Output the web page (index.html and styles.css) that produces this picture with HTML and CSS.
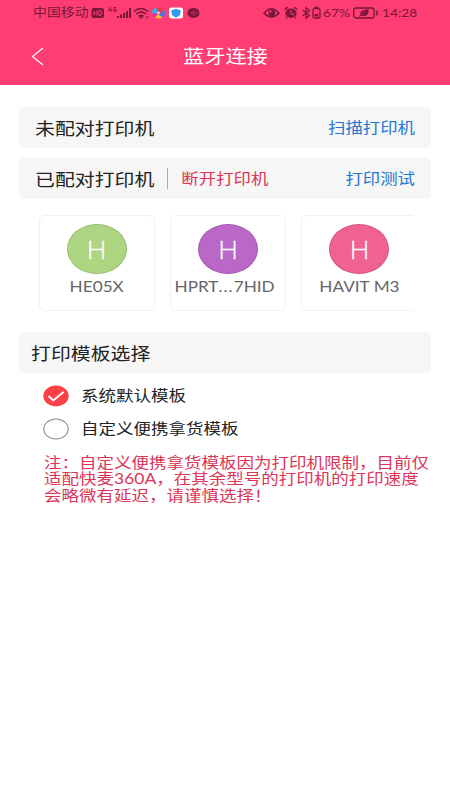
FILE: index.html
```html
<!DOCTYPE html>
<html lang="zh-CN">
<head>
<meta charset="utf-8">
<title>蓝牙连接</title>
<link rel="stylesheet" href="styles.css">
</head>
<body>
<header class="header">
  <div class="status">
    <span class="carrier flat">中国移动</span>
    <svg class="icons-left" width="112" height="18" viewBox="0 0 112 18">
      <rect x="2.500" y="4" width="12.500" height="10" rx="2.500" fill="#76173a"/>
      <path d="M5 6.500v5M8 6.500v5M5 9h3M10 6.500v5h1q2-.2 2-2.500t-2-2.500z" fill="none" stroke="#ff3d73" stroke-width="1"/>
      <path d="M21.500 3L19.500 6.200h3.200M22 4.500V7.700M27 3.500h-2.200v3.700h2.400v-1.700h-1.200" fill="none" stroke="#76173a" stroke-width=".9"/>
      <path d="M27.500 12v2M30.500 10.500v3.500M33.500 9v5M36.500 7v7M39.500 4v10" transform="translate(1.500 0)" stroke="#76173a" stroke-width="1.900"/>
      <path d="M45 7.500q7-6 14 0M47.200 10q4.800-4 9.600 0M49.500 12.300q2.500-2 5 0" fill="none" stroke="#76173a" stroke-width="1.500"/>
      <path d="M50.500 12.800h3L52 14.500zM57 12.500v2M59 12v2.500" fill="#76173a" stroke="#76173a" stroke-width=".8"/>
      <path d="M63.200 9q-.8-4.500 4.500-5l2.500 3.500-3.700 2z" fill="#28b4e6"/>
      <path d="M67.500 4q5-1.500 7.500 2l-3 4-3-1.500z" fill="#e83a4c"/>
      <path d="M75 6q3 4.500-2 7.500l-4-1.500 3-3z" fill="#3f7be8"/>
      <path d="M63.200 9q0 3.500 3 4.700l2.300-3.500z" fill="#d83aa0"/>
      <path d="M66.200 13.700q4 1.500 7-.3l-4.300-3.400z" fill="#ffc62c"/>
      <circle cx="69.500" cy="8.700" r="1.300" fill="#f7dce8"/>
      <rect x="80" y="3.500" width="14" height="11" rx="2.500" fill="#fff"/>
      <path d="M87 4.800q2 1.200 4.500 1.200v3q-.5 3-4.500 4.500-4-1.500-4.500-4.500V6q2.500 0 4.500-1.200z" fill="#319bf0"/>
      <ellipse cx="104.500" cy="9" rx="6" ry="5" fill="#76173a"/>
      <path d="M100.500 9h1.500M103 7.500v3M105 6v6M107 8v2M108 9h1" stroke="#ff3d73" stroke-width=".6"/>
    </svg>
    <svg class="icons-right" width="59" height="18" viewBox="0 0 59 18">
      <path d="M1 9.300q7.500-9 15 0-7.500 7.500-15 0z" fill="none" stroke="#76173a" stroke-width="1.500"/>
      <ellipse cx="8.800" cy="9" rx="3.500" ry="3.300" fill="#76173a"/>
      <circle cx="7.500" cy="7.700" r="1.100" fill="#ff3d73"/>
      <ellipse cx="28" cy="9.200" rx="5.600" ry="4.700" fill="#76173a"/>
      <path d="M22 6q.5-2 3-2.500M31 3.500q2.500.5 3 2.500M24 13l-1 1.500M32 13l1 1.500" fill="none" stroke="#76173a" stroke-width="1.300"/>
      <path d="M28 6v3.500l3 1.500" fill="none" stroke="#ff3d73" stroke-width="1.100"/>
      <path d="M39.500 6l7 5.500-3.500 2.800V3.700l3.500 2.800-7 5.500" fill="none" stroke="#76173a" stroke-width="1.200"/>
      <path d="M52 4.500V3.500h3v1M51.200 4.700h4.600q1.200 0 1.200 1.300v6.500q0 1.500-1.200 1.500h-4.600q-1.200 0-1.200-1.500V6q0-1.300 1.200-1.300z" fill="none" stroke="#76173a" stroke-width="1.300"/>
      <path d="M51.700 10h3.600v2.500h-3.600z" fill="#76173a"/>
    </svg>
    <span class="percent flat">67%</span>
    <svg class="battery" width="26" height="18" viewBox="0 0 26 18">
      <rect x=".7" y="4" width="20.500" height="10" rx="2.500" fill="none" stroke="#76173a" stroke-width="1.300"/>
      <path d="M24 6.500v5" stroke="#76173a" stroke-width="1.500"/>
      <path d="M15.500 5.200q.8 7-5 6.800-1.500 0-2.500-.5L6.700 12.800 6 12.300l1.300-1.600Q6 6.500 15.500 5.200z" fill="#76173a"/>
      <path d="M8 11.200l4.500-3.500" stroke="#ff3d73" stroke-width=".5"/>
    </svg>
    <span class="time flat">14:28</span>
  </div>
  <div class="navbar">
    <svg class="back" width="14" height="20" viewBox="0 0 14 20"><path d="M12 2L1.500 10.500 12 19" fill="none" stroke="#fff" stroke-width="1.200"/></svg>
    <h1 class="title flat">蓝牙连接</h1>
  </div>
</header>
<main class="content">
  <section class="bar">
    <span class="heading flat">未配对打印机</span>
    <a class="action flat">扫描打印机</a>
  </section>
  <section class="bar">
    <span class="heading flat">已配对打印机</span>
    <i class="divider"></i>
    <a class="disconnect flat">断开打印机</a>
    <a class="action flat">打印测试</a>
  </section>
  <div class="devices">
    <div class="device"><div class="avatar green"><span class="initial">H</span></div><span class="name flat">HE05X</span></div>
    <div class="device"><div class="avatar purple"><span class="initial">H</span></div><span class="name long flat">HPRT<span class="dots">...</span>7HID</span></div>
    <div class="device"><div class="avatar pink"><span class="initial">H</span></div><span class="name flat">HAVIT M3</span></div>
  </div>
  <section class="bar template">
    <span class="heading flat">打印模板选择</span>
  </section>
  <div class="options">
    <div class="option">
      <svg width="26" height="22" viewBox="0 0 26 22"><ellipse cx="13" cy="11" rx="12.700" ry="10.400" fill="#fc4046"/><path d="M5.500 11l4.800 4.500L20.500 7" fill="none" stroke="#fff" stroke-width="2"/></svg>
      <span class="flat">系统默认模板</span>
    </div>
    <div class="option">
      <svg width="26" height="22" viewBox="0 0 26 22"><ellipse cx="13" cy="11" rx="12.200" ry="10" fill="#fff" stroke="#8b8b8b" stroke-width="1.100"/></svg>
      <span class="flat">自定义便携拿货模板</span>
    </div>
  </div>
  <p class="note">注：自定义便携拿货模板因为打印机限制，目前仅<br>适配快麦<span class="model">360A</span>，在其余型号的打印机的打印速度<br>会略微有延迟，请谨慎选择！</p>
</main>
</body>
</html>
```
FILE: styles.css
```css
* { box-sizing: border-box; }
body {
  margin: 0;
  height: 800px;
  overflow: hidden;
  background: #fff;
  color: #222;
  font-family: Lato, "Noto Sans CJK SC", sans-serif;
}
/* Wide, low letterforms used across the interface */
.flat { display: inline-block; transform: scaleY(.86); white-space: nowrap; line-height: 24px; }
.header { height: 85px; background: #ff3d73; }
.status {
  display: flex;
  align-items: center;
  height: 25px;
  padding-left: 33px;
  color: #76173a;
}
.status svg { flex: none; }
.carrier { width: 56px; font-size: 13.9px; }
.icons-right { margin-left: 62px; }
.percent { width: 27px; margin-left: 1px; font-size: 13.8px; }
.battery { margin-left: 3px; }
.time { margin-left: 3px; font-size: 13.7px; }
.navbar { display: flex; align-items: center; height: 61px; padding-left: 31px; }
.title { margin: 0 0 0 138px; font-size: 21.200px; font-weight: 400; color: #fff; }
.content { padding: 22px 19px 0; }
.bar {
  display: flex;
  align-items: center;
  height: 41px;
  padding: 0 16px;
  border-radius: 5px;
  background: #f6f6f6;
}
.bar + .bar { margin-top: 10px; }
.heading { font-size: 19.900px; }
.action { margin-left: auto; font-size: 17.400px; color: #2478d0; }
.divider { width: 1px; height: 21px; margin: 0 13px; background: #aaa; }
.disconnect { font-size: 17.400px; color: #dc3558; }
.devices {
  display: flex;
  gap: 15px;
  height: 96px;
  margin: 16px 18px 0 19.500px;
  overflow: hidden;
}
.device {
  display: flex;
  flex: none;
  flex-direction: column;
  align-items: center;
  width: 116.400px;
  height: 96px;
  padding-top: 8px;
  border: 1.500px solid #f1f1f1;
  border-radius: 6px;
}
.avatar {
  display: flex;
  align-items: center;
  justify-content: center;
  flex: none;
  width: 60px;
  height: 50px;
  border: 1px solid rgba(0, 0, 0, .12);
  border-radius: 50%;
  color: #fff;
}
.initial { font-size: 26px; line-height: 30px; -webkit-text-stroke: .3px #fff; font-weight: 300; }
.green { background: #aed581; }
.purple { background: #ba68c8; }
.pink { background: #f06292; }
.name { margin-top: 1px; font-size: 17.200px; color: #666; }
.long { margin-left: -7px; }
.dots { letter-spacing: 1px; }
.template { margin-top: 21px; padding-left: 12px; }
.options { padding: 12px 0 0 24px; }
.option { display: flex; align-items: center; gap: 12px; height: 22px; font-size: 17.500px; }
.option + .option { margin-top: 11px; }
.note {
  margin: 14px 0 0 25px;
  font-size: 17.500px;
  line-height: 19.300px;
  white-space: nowrap;
  color: #dc3558;
  transform: scaleY(.86);
  transform-origin: 0 0;
}
```
